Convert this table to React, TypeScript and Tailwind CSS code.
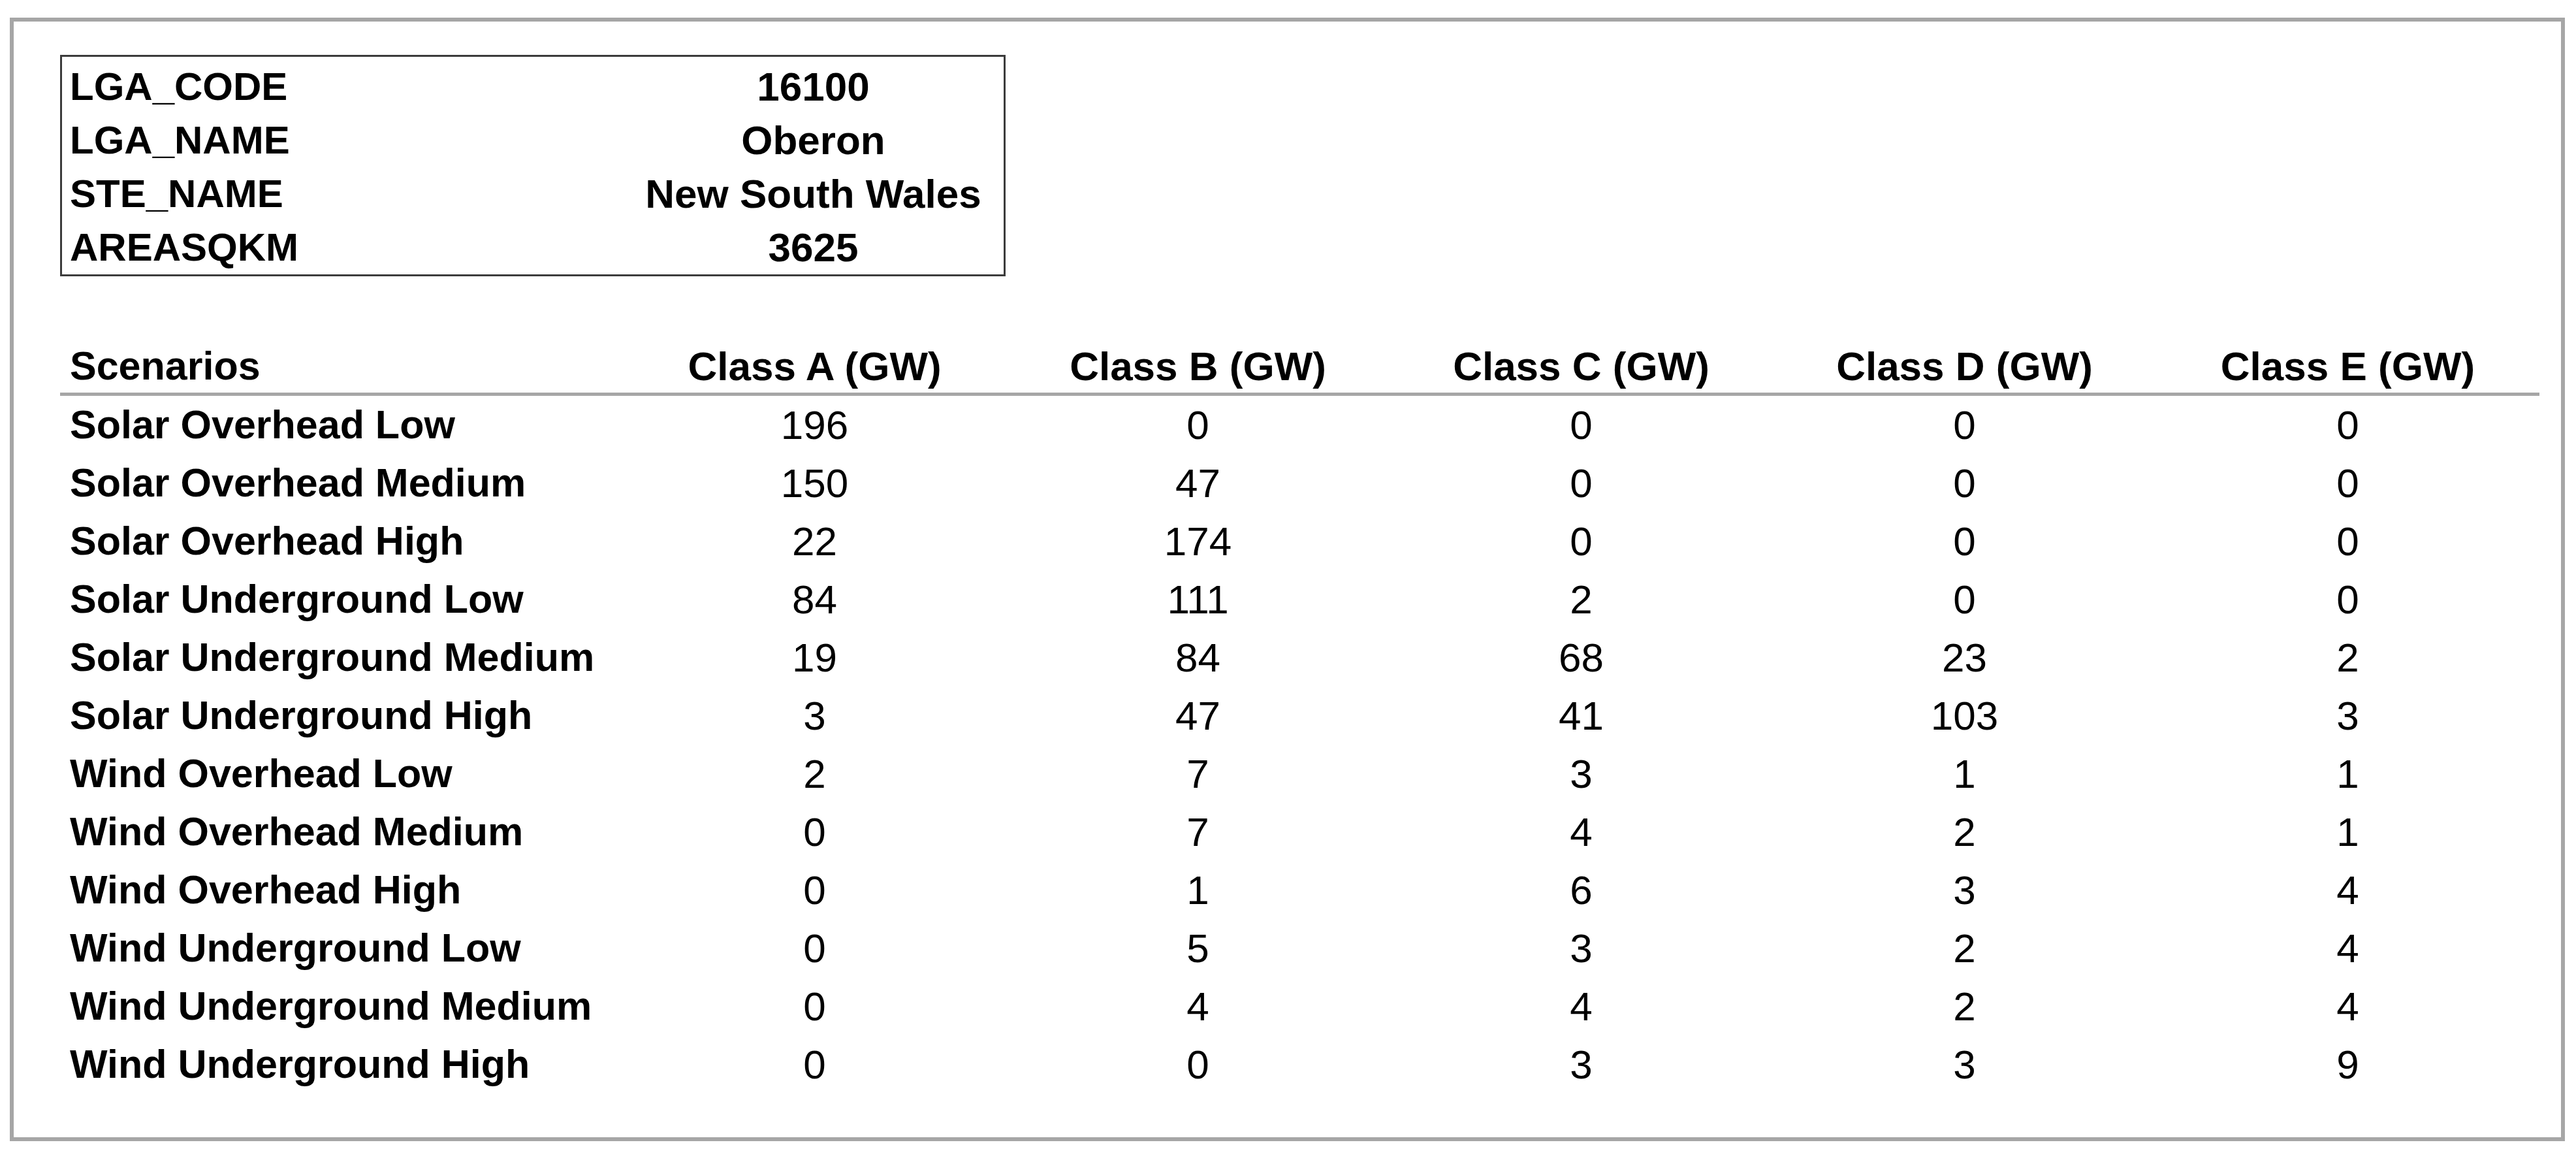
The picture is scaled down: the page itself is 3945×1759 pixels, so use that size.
import React from 'react';

const info = [
  { label: 'LGA_CODE', value: '16100' },
  { label: 'LGA_NAME', value: 'Oberon' },
  { label: 'STE_NAME', value: 'New South Wales' },
  { label: 'AREASQKM', value: '3625' },
];

const classes = ['Class A (GW)', 'Class B (GW)', 'Class C (GW)', 'Class D (GW)', 'Class E (GW)'];

const scenarios: { name: string; values: number[] }[] = [
  { name: 'Solar Overhead Low', values: [196, 0, 0, 0, 0] },
  { name: 'Solar Overhead Medium', values: [150, 47, 0, 0, 0] },
  { name: 'Solar Overhead High', values: [22, 174, 0, 0, 0] },
  { name: 'Solar Underground Low', values: [84, 111, 2, 0, 0] },
  { name: 'Solar Underground Medium', values: [19, 84, 68, 23, 2] },
  { name: 'Solar Underground High', values: [3, 47, 41, 103, 3] },
  { name: 'Wind Overhead Low', values: [2, 7, 3, 1, 1] },
  { name: 'Wind Overhead Medium', values: [0, 7, 4, 2, 1] },
  { name: 'Wind Overhead High', values: [0, 1, 6, 3, 4] },
  { name: 'Wind Underground Low', values: [0, 5, 3, 2, 4] },
  { name: 'Wind Underground Medium', values: [0, 4, 4, 2, 4] },
  { name: 'Wind Underground High', values: [0, 0, 3, 3, 9] },
];

const App = () => {
  return (
    <div className="min-h-screen bg-white pl-[15px] pt-[27px] [font-family:Liberation_Sans,Arial,sans-serif] text-[62px] text-black">
      <div className="w-[3913px] border-[6px] border-[#a6a6a6] pl-[71px] pr-[33px] pt-[51px] pb-[67px]">
        {/* LGA details */}
        <div className="w-[1448px] border-[3px] border-[#3c3c3c] pt-[5px]">
          {info.map((row) => (
            <div key={row.label} className="grid grid-cols-[859px_583px] h-[82px] leading-[82px] font-bold">
              <div className="pl-[12px] text-[60px] whitespace-nowrap">{row.label}</div>
              <div className="text-center whitespace-nowrap">{row.value}</div>
            </div>
          ))}
        </div>

        {/* Scenario table */}
        <div className="mt-[103px] w-[3797px]">
          <div className="grid grid-cols-[862px_repeat(5,587px)] leading-[69px] pb-[6px] font-bold border-b-[5px] border-[#a6a6a6]">
            <div className="pl-[15px] text-[61px] whitespace-nowrap">Scenarios</div>
            {classes.map((c) => (
              <div key={c} className="text-center whitespace-nowrap">{c}</div>
            ))}
          </div>
          {scenarios.map((s) => (
            <div key={s.name} className="grid grid-cols-[862px_repeat(5,587px)] h-[89px] leading-[89px]">
              <div className="pl-[15px] text-[61px] font-bold whitespace-nowrap">{s.name}</div>
              {s.values.map((v, i) => (
                <div key={i} className="text-center">{v}</div>
              ))}
            </div>
          ))}
        </div>
      </div>
    </div>
  );
};

export default App;
